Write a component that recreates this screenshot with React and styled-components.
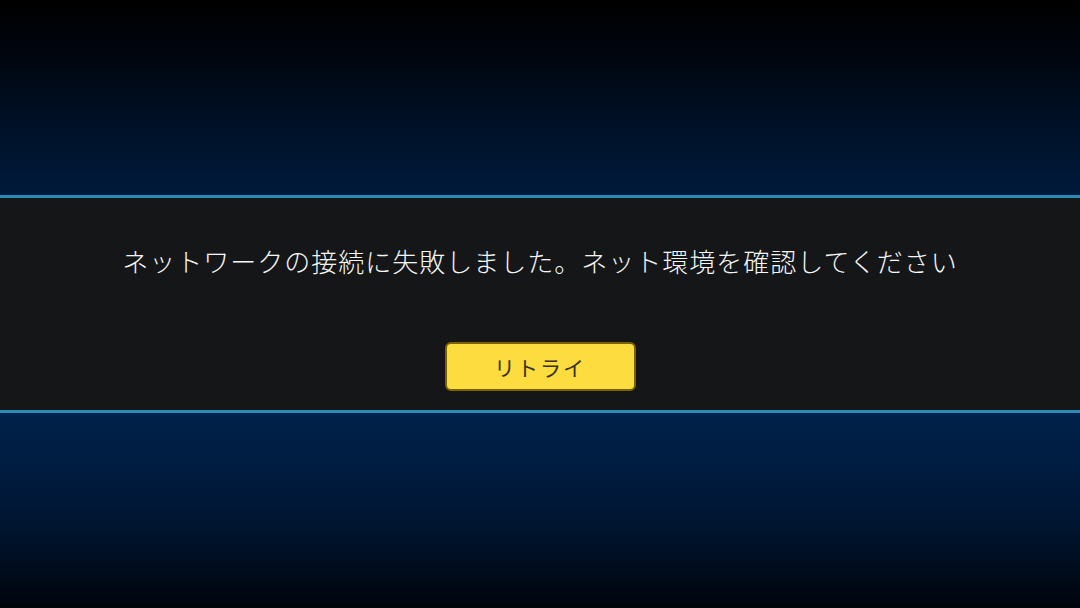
import React from "react";
import styled, { createGlobalStyle } from "styled-components";

const GlobalStyle = createGlobalStyle`
  html, body {
    margin: 0;
    padding: 0;
    background: #000;
  }
  body {
    font-family: "Noto Sans CJK JP", "Noto Sans", sans-serif;
  }
`;

const Screen = styled.div`
  width: 1080px;
  height: 608px;
  display: flex;
  flex-direction: column;
  overflow: hidden;
`;

const Sky = styled.div`
  height: 195px;
  flex: ${({ flip }) => (flip ? 1 : "none")};
  background: ${({ flip }) =>
    flip
      ? "linear-gradient(to bottom, #00214a 0%, #001c40 30%, #00142e 60%, #000a18 85%, #00050c 100%)"
      : "linear-gradient(to bottom, #000000 0%, #000610 30%, #00142e 75%, #001a3b 100%)"};
`;

const Line = styled.div`
  height: 3px;
  background: #2a8cb6;
`;

const Panel = styled.div`
  height: 212px;
  background: #141618;
  display: flex;
  flex-direction: column;
  align-items: center;
  padding-top: 44px;
  box-sizing: border-box;
`;

const Message = styled.p`
  margin: 0;
  color: #f6f6f6;
  font-size: 26px;
  font-weight: 300;
  line-height: 38px;
  letter-spacing: 1px;
`;

const RetryButton = styled.button`
  margin-top: 62px;
  width: 191px;
  height: 49px;
  border: 2px solid #7a6200;
  border-radius: 6px;
  background: #fddc40;
  color: #3a3112;
  font-family: inherit;
  font-size: 21px;
  font-weight: 400;
  letter-spacing: 2px;
  cursor: pointer;
`;

export default function App() {
  return (
    <Screen>
      <GlobalStyle />
      <Sky />
      <Line />
      <Panel>
        <Message>ネットワークの接続に失敗しました。ネット環境を確認してください</Message>
        <RetryButton>リトライ</RetryButton>
      </Panel>
      <Line />
      <Sky flip />
    </Screen>
  );
}
